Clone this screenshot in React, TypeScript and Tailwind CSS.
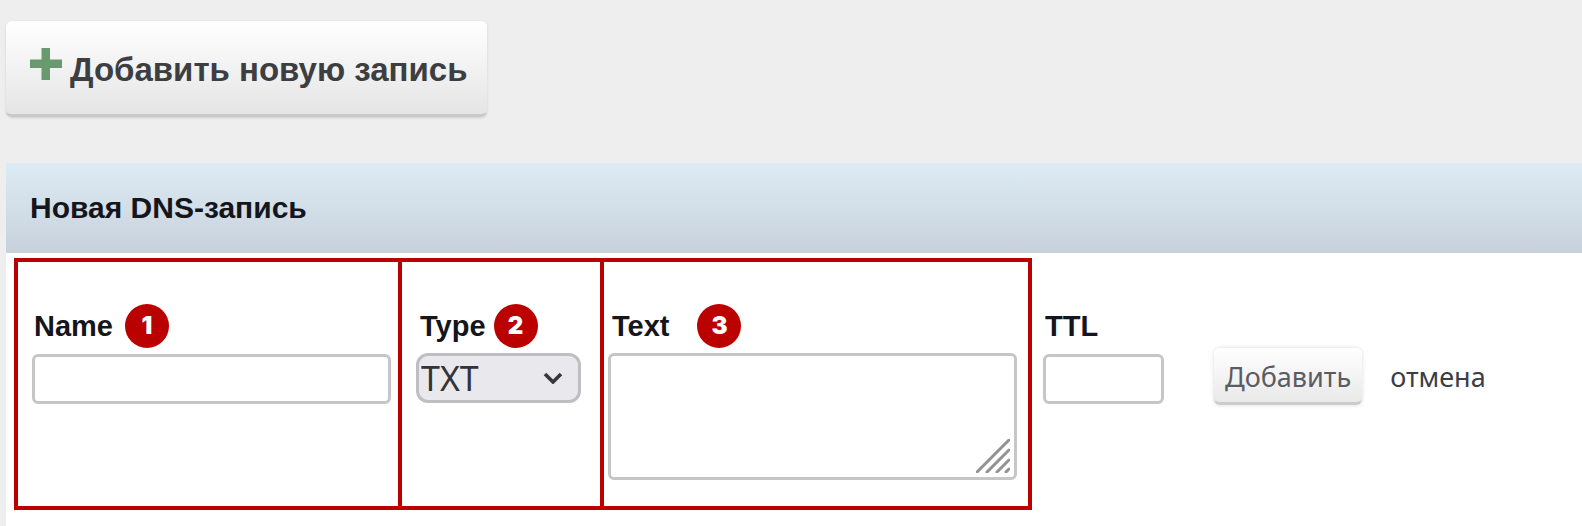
import { useState, type ReactNode } from "react";

const FIELD = "block rounded-md border-[3px] border-[#c6c6c8] bg-white px-2 text-[28px] leading-8 outline-none";

function Badge({ children }: { children: ReactNode }) {
  return (
    <span className="flex size-11 items-center justify-center rounded-full bg-[#bb0000] font-[Inter] text-[24px] leading-8 font-black text-white">
      {children}
    </span>
  );
}

function PlusIcon() {
  return (
    <svg className="mb-2 size-8 shrink-0" viewBox="0 0 32 32" aria-hidden="true">
      <path d="M11.5 0h8.500v11.500H32v8.500H20V32h-8.500V20H0v-8.500h11.500z" fill="#68996f" />
    </svg>
  );
}

export default function App() {
  const [name, setName] = useState("");
  const [type, setType] = useState("TXT");
  const [text, setText] = useState("");
  const [ttl, setTtl] = useState("");

  return (
    <div className="flex min-h-screen flex-col overflow-hidden bg-[#eeeeee] pt-[21px] pl-[6px] font-['Liberation_Sans',sans-serif]">
      <button
        type="button"
        className="flex h-24 items-center gap-2 self-start rounded-md border-b-[3px] border-[#c9c9c9] bg-linear-to-b from-white to-[#e5e5e5] pr-5 pl-6 shadow-sm"
      >
        <PlusIcon />
        <span className="pt-1 text-[33px] leading-9 font-bold text-[#3c3e42]">Добавить новую запись</span>
      </button>

      <section className="mt-[46px] flex grow flex-col bg-white">
        <h2 className="flex h-[90px] items-center bg-linear-to-b from-[#dcebf5] to-[#c8d1db] px-6 text-[30px] leading-10 font-bold text-[#15151c]">
          Новая DNS-запись
        </h2>

        <form className="flex items-start pt-[5px] pl-2" onSubmit={e => e.preventDefault()}>
          <div className="flex h-[252px] border-4 border-[#bb0000] text-[29px] leading-9 font-bold text-[#15151c]">
            <div className="w-[384px] border-r-4 border-[#bb0000] pt-10 pl-[14px]">
              <div className="flex h-12 items-center gap-3 pl-0.5">
                <label htmlFor="name">Name</label>
                <Badge>1</Badge>
              </div>
              <input id="name" value={name} onChange={e => setName(e.target.value)} className={`${FIELD} mt-1 h-[50px] w-[359px]`} />
            </div>
            <div className="w-[202px] border-r-4 border-[#bb0000] pt-10 pl-[14px]">
              <div className="flex h-12 items-center gap-2 pl-1">
                <label htmlFor="type">Type</label>
                <Badge>2</Badge>
              </div>
              <div className="relative mt-[3px] w-[165px]">
                <select
                  id="type"
                  value={type}
                  onChange={e => setType(e.target.value)}
                  className="block h-[50px] w-full appearance-none rounded-xl border-[3px] border-[#bfbfc3] bg-[#e9e9ed] pl-[2px] font-['Noto_Sans',sans-serif] text-[34px] leading-10 font-normal text-[#333338] outline-none"
                >
                  <option>TXT</option>
                  <option>A</option>
                  <option>MX</option>
                </select>
                <svg className="pointer-events-none absolute top-[19px] right-[18px] h-3 w-5" viewBox="0 0 20 12" aria-hidden="true">
                  <path d="M2 2l8 8 8-8" fill="none" stroke="#38383c" strokeWidth="3.600" />
                </svg>
              </div>
            </div>
            <div className="w-[424px] pt-10 pl-1">
              <div className="flex h-12 items-center gap-7 pl-1">
                <label htmlFor="text">Text</label>
                <Badge>3</Badge>
              </div>
              <div className="relative mt-[3px] w-[409px]">
                <textarea id="text" value={text} onChange={e => setText(e.target.value)} className={`${FIELD} h-[127px] w-full resize-none`} />
                <svg className="pointer-events-none absolute right-[7px] bottom-[7px] size-[34px]" viewBox="0 0 34 34" aria-hidden="true">
                  <path d="M1 33L33 1M11 33L33 11M21 33L33 21M30 33l3-3" stroke="#929292" strokeWidth="3" strokeLinecap="round" />
                </svg>
              </div>
            </div>
          </div>

          <div className="ml-[11px] pt-11">
            <div className="flex h-12 items-center pl-0.5 text-[29px] leading-9 font-bold text-[#15151c]">
              <label htmlFor="ttl">TTL</label>
            </div>
            <input id="ttl" value={ttl} onChange={e => setTtl(e.target.value)} className={`${FIELD} mt-1 h-[50px] w-[121px]`} />
          </div>

          <div className="ml-[50px] flex items-center gap-7 pt-[90px] font-['Noto_Sans',sans-serif] text-[27px] leading-9">
            <button
              type="submit"
              className="h-[57px] rounded-md border-b-[3px] border-[#cccccc] bg-linear-to-b from-white to-[#e9e9e9] px-[11px] pt-1 text-[#5a5c64] shadow-[0_0_4px_rgba(0,0,0,0.15)]"
            >
              Добавить
            </button>
            <a href="#" className="text-[#3c3e46]">отмена</a>
          </div>
        </form>
      </section>
    </div>
  );
}
